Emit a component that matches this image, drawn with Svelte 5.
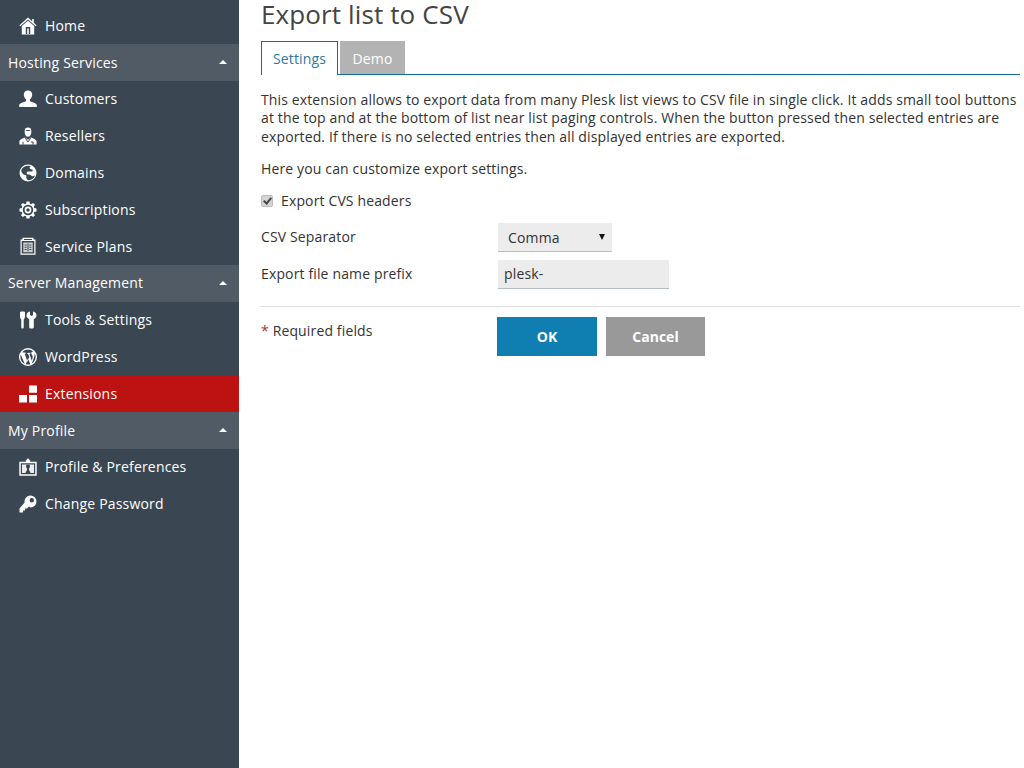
<script>
  const groups = [
    { items: [{ label: 'Home', icon: 'home' }] },
    {
      title: 'Hosting Services',
      items: [
        { label: 'Customers', icon: 'customer' },
        { label: 'Resellers', icon: 'reseller' },
        { label: 'Domains', icon: 'globe' },
        { label: 'Subscriptions', icon: 'gear' },
        { label: 'Service Plans', icon: 'plans' }
      ]
    },
    {
      title: 'Server Management',
      items: [
        { label: 'Tools & Settings', icon: 'tools' },
        { label: 'WordPress', icon: 'wp' },
        { label: 'Extensions', icon: 'ext', active: true }
      ]
    },
    {
      title: 'My Profile',
      items: [
        { label: 'Profile & Preferences', icon: 'profile' },
        { label: 'Change Password', icon: 'key' }
      ]
    }
  ];
</script>

<div class="page">
  <nav class="sidebar">
    {#each groups as group}
      {#if group.title}
        <div class="group-title">
          <span class="label">{group.title}</span>
          <i class="caret"></i>
        </div>
      {/if}
      {#each group.items as item}
        <div class="item" class:active={item.active}>
          <svg class="icon" viewBox="0 0 18 18" fill="#fff">
            {#if item.icon === 'home'}
              <path d="M9 0.500 0.500 8.200 1.300 9.200 9 2.600 16.700 9.200 17.500 8.200 14.800 5.800V2H13.200V4.400Z" />
              <path fill-rule="evenodd" d="M9 3.800 2.800 9.100V17.500H15.200V9.100ZM6.800 10H11.200V17H9.800V11.500H8.200V17H6.800Z" />
            {:else if item.icon === 'customer'}
              <path d="M9 0.500C6.300 0.500 4.800 2.200 4.800 4.600 4.800 6.700 5.800 8.400 7 9.300V11.300C5.200 12.300 0.200 13 0.200 15.200V17H17.800V15.200C17.800 13 12.800 12.300 11 11.300V9.300C12.200 8.400 13.200 6.700 13.200 4.600 13.200 2.200 11.700 0.500 9 0.500Z" />
            {:else if item.icon === 'reseller'}
              <path fill-rule="evenodd" d="M9 0.500C7 0.500 5.700 1.800 5.700 3.600V5.500C5.700 7.600 7.200 9.800 9 9.800S12.300 7.600 12.300 5.500V3.600C12.300 1.800 11 0.500 9 0.500ZM6.700 3.900C8 4.100 10 4.100 11.300 3.900V3.400C10 2.800 8 2.800 6.700 3.400Z" />
              <path d="M6.200 10.600C3.800 11.600 0.800 12.200 0.400 14.600V17.600H17.600V14.600C17.200 12.200 14.200 11.600 11.800 10.600L9 12.800Z" />
              <path d="M6.300 11.200 9 15 11.700 11.200M4 14.800V17.600M14 14.800V17.600M11.800 15H14" fill="none" stroke="#3a4753" stroke-width="1" />
            {:else if item.icon === 'globe'}
              <path fill-rule="evenodd" d="M9 0.500A8.500 8.500 0 1 0 9 17.500 8.500 8.500 0 0 0 9 0.500ZM9 1.700C6 1.700 3.400 3.500 2.300 6.100 2.100 8 3.500 10 5.300 10.800 7 11 8 12 7.200 13.400 7.500 15 8.500 15.900 9.700 16.300 12.800 16 15.300 14 16.100 11.200 14.500 12.600 12.800 12.300 12 11.400 11.200 10.500 10 10.500 8.800 10.600 7.500 10 7 8.600 8.200 7.700 9.500 7 11.500 7.800 13 7.500 14 7 14 5.800 13 5.500 11.800 5.300 10.500 4.800 10.500 3.500 11 2.800 11.500 2.400 12 2.300 11.200 1.900 10.200 1.700 9 1.700Z" />
            {:else if item.icon === 'gear'}
              <path fill-rule="evenodd" d="M7.500 0.500H10.500L10.900 2.800 12.200 3.300 14.200 2 16 3.800 14.700 5.800 15.200 7.100 17.500 7.500V10.500L15.200 10.900 14.700 12.200 16 14.200 14.200 16 12.200 14.700 10.900 15.200 10.500 17.500H7.500L7.100 15.200 5.800 14.700 3.800 16 2 14.200 3.300 12.200 2.800 10.900 0.500 10.500V7.500L2.800 7.100 3.300 5.800 2 3.800 3.800 2 5.800 3.300 7.100 2.800ZM9 3.800A5.200 5.200 0 1 0 9 14.200 5.200 5.200 0 0 0 9 3.800ZM9 5.600A3.400 3.400 0 1 1 9 12.400 3.400 3.400 0 0 1 9 5.600ZM9 7.300A1.700 1.700 0 1 0 9 10.700 1.700 1.700 0 0 0 9 7.300Z" />
            {:else if item.icon === 'plans'}
              <path fill-rule="evenodd" d="M1.500 2.500H3.500V0.800H14.500V2.500H16.500V17.800H1.500ZM2.700 4V16.600H15.300V4ZM5 2H13V3H5Z" />
              <path d="M4.300 5.500H13.700V15.200H4.300Z" opacity=".75" />
              <path d="M8.500 6.500H9.500V14.200H8.500ZM5.600 7.500H7.600V8.500H5.600ZM5.600 9.700H7.600V10.700H5.600ZM5.600 11.900H7.600V12.900H5.600ZM10.400 7.500H12.400V8.500H10.400ZM10.400 9.700H12.400V10.700H10.400ZM10.400 11.900H12.400V12.900H10.400Z" fill="#3a4753" />
            {:else if item.icon === 'tools'}
              <path d="M1 1.500C1 0.800 1.800 0.500 3.500 0.500S6 0.800 6 1.500V5C6 7 5.300 8 4.700 8.500V16C4.700 17 4.300 17.500 3.500 17.500S2.300 17 2.300 16V8.500C1.700 8 1 7 1 5Z" />
              <path d="M9.500 1 11 0.500V4L12.500 5 14 4V0.500L15.500 1C17 2 17.500 3.300 17.500 4.500 17.500 6.200 16.300 7.500 14.800 8.200V16C14.800 17 14.100 17.500 12.500 17.500 11 17.500 10.200 17 10.200 16V8.200C8.700 7.500 7.500 6.200 7.500 4.500 7.500 3.300 8 2 9.500 1Z" />
            {:else if item.icon === 'wp'}
              <path fill-rule="evenodd" d="M9 0A9 9 0 1 0 9 18 9 9 0 0 0 9 0ZM3.100 4.200C4.500 2.500 6.600 1.400 9 1.400 11 1.400 12.800 2.200 14.200 3.400 13 3.300 12.300 4.200 12.300 5.100 12.300 6 13 6.800 13.400 7.600 13.700 8.300 13.800 9 13.600 10L12.800 12.800 10.400 5.700 11.600 5.500V4.800L8 4.900 8 5.500 9 5.700 10.300 9.100 8.500 14 5.700 5.700 6.900 5.500V4.800ZM1.700 6.400 5.800 16C3.200 14.800 1.400 12.100 1.400 9 1.400 8.100 1.500 7.200 1.700 6.400ZM9 10.300 11.300 16.200C10.500 16.500 9.800 16.600 9 16.600 8.200 16.600 7.500 16.500 6.800 16.300ZM15.400 5C16.200 6.100 16.600 7.500 16.600 9 16.600 11.800 15 14.300 12.800 15.600L15 9.500C15.400 8.300 15.600 7.300 15.600 6.500 15.600 6 15.500 5.500 15.400 5Z" />
            {:else if item.icon === 'ext'}
              <path d="M0 10H8V17.400H0ZM10 10H18V17.400H10ZM10 0.400H18V7.800H10Z" />
            {:else if item.icon === 'profile'}
              <path fill-rule="evenodd" d="M0.300 3.800H6.800V2.300H7.800V0.800H10.200V2.300H11.200V3.800H17.700V17.700H0.300ZM1.800 5.300V16.200H16.200V5.300Z" />
              <path d="M3 6.500H15V15H11.500C11 13 10.200 12.800 10 12.300V10.500C10.600 10 11 9.200 11 8.300 11 7.200 10.200 6.800 9 6.800S7 7.200 7 8.300C7 9.200 7.400 10 8 10.500V12.300C7.800 12.800 7 13 6.500 15H3Z" opacity=".9" />
            {:else if item.icon === 'key'}
              <path fill-rule="evenodd" d="M11.500 0.500A6 6 0 0 0 5.600 7.600L0.500 13.500V17.500H4V15.500H6V13.500H8L10 11.500 11.500 12.500A6 6 0 0 0 11.500 0.500ZM12.800 3A2.200 2.200 0 1 1 12.800 7.400 2.200 2.200 0 0 1 12.800 3Z" />
            {/if}
          </svg>
          <span class="label">{item.label}</span>
        </div>
      {/each}
    {/each}
  </nav>

  <main class="content">
    <h1>Export list to CSV</h1>

    <div class="tabs">
      <div class="tab current">Settings</div>
      <div class="tab">Demo</div>
    </div>

    <p class="intro">This extension allows to export data from many Plesk list views to CSV file in single click. It adds small tool buttons at the top and at the bottom of list near list paging controls. When the button pressed then selected entries are exported. If there is no selected entries then all displayed entries are exported.</p>
    <p class="hint">Here you can customize export settings.</p>

    <label class="check">
      <input type="checkbox" checked />
      <span>Export CVS headers</span>
    </label>

    <div class="field first">
      <span class="field-label">CSV Separator</span>
      <div class="select-wrap">
        <select class="select">
          <option>Comma</option>
        </select>
      </div>
    </div>
    <div class="field">
      <span class="field-label">Export file name prefix</span>
      <input class="text" type="text" value="plesk-" />
    </div>

    <div class="actions">
      <span class="required"><em>*</em> Required fields</span>
      <button class="btn ok">OK</button>
      <button class="btn cancel">Cancel</button>
    </div>
  </main>
</div>

<style>
  :global(body) {
    margin: 0;
    background: #fff;
  }

  .page {
    display: flex;
    min-height: 768px;
    font: 14px/20px "Open Sans", sans-serif;
    color: #333;
  }

  .sidebar {
    width: 239px;
    flex: none;
    background: #3a4753;
    padding-top: 7.2px;
    box-sizing: border-box;
    color: #fff;
  }

  .group-title,
  .item {
    height: 36.8px;
    display: flex;
    align-items: center;
    box-sizing: border-box;
  }

  .label {
    letter-spacing: 0.18px;
    padding-top: 0.6px;
  }

  .group-title {
    background: #505b65;
    padding: 0 12px 0 8px;
    justify-content: space-between;
  }

  .caret {
    width: 0;
    height: 0;
    border-left: 4px solid transparent;
    border-right: 4px solid transparent;
    border-bottom: 4px solid #fff;
  }

  .item {
    padding-left: 19px;
    gap: 8px;
  }

  .item.active {
    background: #bd1212;
  }

  .icon {
    width: 18px;
    height: 18px;
    flex: none;
  }

  .content {
    width: 759px;
    padding-left: 22px;
    flex: none;
    letter-spacing: 0.14px;
  }

  h1 {
    margin: 0;
    font-size: 26px;
    font-weight: 400;
    line-height: 28px;
    color: #444;
    letter-spacing: 0.12px;
  }

  .tabs {
    display: flex;
    gap: 2px;
    margin-top: 13px;
    height: 33px;
    border-bottom: 1px solid #0f6e96;
  }

  .tab {
    padding: 0 12.5px;
    height: 33px;
    line-height: 35px;
    background: #b3b3b3;
    color: #fff;
    box-sizing: border-box;
  }

  .tab.current {
    width: 77px;
    padding: 0 11px;
    height: 34px;
    background: #fff;
    color: #2a7aa5;
    border: 1px solid #0f6e96;
    border-bottom: 0;
    line-height: 34px;
  }

  .intro {
    margin: 16px 0 0;
    line-height: 18.4px;
    letter-spacing: 0.13px;
  }

  .hint {
    margin: 14px 0 0;
    line-height: 18px;
  }

  .check {
    display: flex;
    align-items: center;
    gap: 8px;
    margin-top: 14px;
    height: 18px;
  }

  .check input {
    appearance: none;
    position: relative;
    margin: 0;
    width: 12px;
    height: 12px;
    background: #d4d4d4;
    border: 1px solid #bcbcbc;
    border-radius: 2px;
    box-sizing: border-box;
  }

  .check input:checked::after {
    content: "";
    position: absolute;
    left: 3px;
    top: 0;
    width: 3px;
    height: 6px;
    border: solid #444;
    border-width: 0 2px 2px 0;
    transform: rotate(40deg);
  }

  .field {
    display: flex;
    align-items: center;
    height: 29px;
    margin-top: 8px;
  }

  .field.first {
    margin-top: 13px;
  }

  .field-label {
    width: 237px;
    flex: none;
    margin-top: -2px;
  }

  .select-wrap {
    position: relative;
    width: 114px;
    height: 29px;
  }

  .select-wrap::after {
    content: "";
    position: absolute;
    left: 101px;
    top: 11px;
    border-left: 3px solid transparent;
    border-right: 3px solid transparent;
    border-top: 6px solid #111;
    pointer-events: none;
  }

  .select,
  .text {
    font: 14px "Open Sans", sans-serif;
    letter-spacing: 0.15px;
    color: #333;
    background: #ececec;
    border: 0;
    border-bottom: 1px solid #b5bcc2;
    border-radius: 0;
    height: 29px;
    box-sizing: border-box;
    outline: 0;
  }

  .select {
    appearance: none;
    width: 114px;
    padding: 0 10px;
  }

  .text {
    width: 171px;
    padding: 0 6px 2px;
  }

  .actions {
    display: flex;
    margin-top: 17px;
    padding-top: 10px;
    border-top: 1px solid #ddd;
  }

  .required {
    width: 236px;
    flex: none;
    padding-top: 4px;
  }

  .required em {
    color: #a33;
    font-style: normal;
  }

  .btn {
    width: 100px;
    height: 39px;
    border: 0;
    border-radius: 0;
    color: #fff;
    font: 700 14px "Open Sans", sans-serif;
    padding: 0;
  }

  .ok {
    background: #0f7eb0;
  }

  .cancel {
    background: #999;
    margin-left: 9px;
    width: 99px;
  }
</style>
